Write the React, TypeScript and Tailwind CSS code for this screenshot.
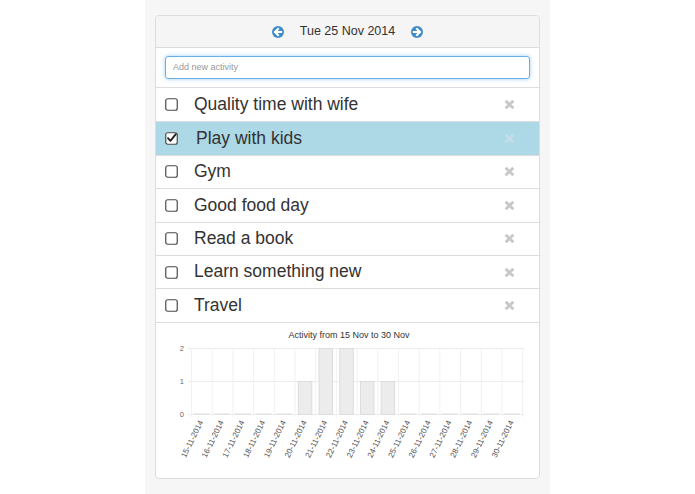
import React from "react";

const activities = [
  { name: "Quality time with wife", done: false },
  { name: "Play with kids", done: true },
  { name: "Gym", done: false },
  { name: "Good food day", done: false },
  { name: "Read a book", done: false },
  { name: "Learn something new", done: false },
  { name: "Travel", done: false },
];

const values = [0, 0, 0, 0, 0, 1, 2, 2, 1, 1, 0, 0, 0, 0, 0, 0];

function CircleArrow({ dir }: { dir: "left" | "right" }) {
  return (
    <svg width="12" height="12" viewBox="0 0 12 12">
      <circle cx="6" cy="6" r="6" fill="#428bca" />
      <g transform={dir === "right" ? "rotate(180 6 6)" : undefined}>
        <path d="M3 6 L6 3 M3 6 L6 9 M3 6 L9.2 6" stroke="#fff" strokeWidth="2" strokeLinecap="square" fill="none" />
      </g>
    </svg>
  );
}

function Checkbox({ checked }: { checked: boolean }) {
  return (
    <svg width="13" height="13" viewBox="0 0 13 13" className="shrink-0">
      <rect x="0.75" y="0.75" width="11.5" height="11.5" rx="2" fill="#fff" stroke="#4a4a4a" strokeWidth="1.2" />
      {checked && (
        <path d="M3 6.2 L5.4 8.8 L10.8 2.2" stroke="#222" strokeWidth="1.9" fill="none" strokeLinecap="round" strokeLinejoin="round" />
      )}
    </svg>
  );
}

function RemoveIcon({ faint }: { faint?: boolean }) {
  return (
    <svg width="11" height="11" viewBox="0 0 10 10" className="shrink-0">
      <path d="M1.5 1.5 L8.5 8.5 M8.5 1.5 L1.5 8.5" stroke={faint ? "#c2dde6" : "#c8c8c8"} strokeWidth="2.6" strokeLinecap="butt" />
    </svg>
  );
}

function Chart() {
  const x0 = 35;
  const step = 20.7;
  const yFor = (v: number) => 91 - v * 33;
  const labels = values.map((_, i) => `${15 + i}-11-2014`);
  return (
    <svg width="384" height="155" viewBox="0 0 384 155" style={{ fontFamily: '"Liberation Sans", Arial, sans-serif' }}>
      <text x="193" y="15" textAnchor="middle" fontSize="9" fill="#333">
        Activity from 15 Nov to 30 Nov
      </text>
      {[0, 1, 2].map((v) => (
        <g key={v}>
          <line x1={x0 - 3} x2={368} y1={yFor(v) + 0.5} y2={yFor(v) + 0.5} stroke="#ececec" strokeWidth="1" />
          <text x={x0 - 7} y={yFor(v) + 3} textAnchor="end" fontSize="7.5" fill="#666">
            {v}
          </text>
        </g>
      ))}
      {Array.from({ length: 17 }).map((_, i) => (
        <line key={i} x1={x0 + i * step + 0.5} x2={x0 + i * step + 0.5} y1={yFor(2)} y2={yFor(0) + 3} stroke="#f1f1f1" strokeWidth="1" />
      ))}
      {values.map((v, i) => {
        const cx = x0 + step * (i + 0.5);
        if (v === 0) {
          return <rect key={i} x={cx - 8} y={yFor(0) - 0.5} width="16" height="1.2" fill="#dedede" />;
        }
        return (
          <rect key={i} x={cx - 7 + 0.5} y={yFor(v) + 0.5} width="13.5" height={v * 33} fill="#ececec" stroke="#dcdcdc" strokeWidth="1" />
        );
      })}
      {labels.map((l, i) => {
        const cx = x0 + step * (i + 0.5) + 2;
        const y = 99;
        return (
          <text key={l} x={cx} y={y} textAnchor="end" fontSize="8" fill="#555" transform={`rotate(-64 ${cx} ${y})`}>
            {l}
          </text>
        );
      })}
    </svg>
  );
}

export default function App() {
  return (
    <div className="w-[695px] h-[494px] bg-white flex justify-center overflow-hidden" style={{ fontFamily: '"Liberation Sans", Arial, sans-serif' }}>
      <div className="w-[405px] h-full bg-[#f6f6f6] px-[10px] pt-[15px]">
        <div className="border border-[#dddddd] rounded-[4px] bg-white overflow-hidden">
          <div className="h-[32px] bg-[#f5f5f5] border-b border-[#dddddd] flex items-center justify-center">
            <CircleArrow dir="left" />
            <span className="mx-[16px] text-[12.5px] text-[#333] leading-none">Tue 25 Nov 2014</span>
            <CircleArrow dir="right" />
          </div>
          <div className="h-[40px] flex items-center px-[9px] border-b border-[#dddddd]">
            <div className="w-full h-[23px] rounded-[3px] border border-[#66afe9] shadow-[0_0_4px_rgba(102,175,233,0.6)] flex items-center px-[7px] text-[9px] text-[#999]">
              Add new activity
            </div>
          </div>
          {activities.map((a, i) => (
            <div
              key={a.name}
              className={`h-[33.4px] flex items-center pl-[9px] pr-[24px] ${i > 0 ? "border-t border-[#dddddd]" : ""} ${a.done ? "bg-[#add8e6]" : "bg-white"}`}
            >
              <Checkbox checked={a.done} />
              <span className={`${a.done ? "ml-[18px]" : "ml-[16px]"} flex-1 text-[17.5px] text-[#333] leading-none`}>{a.name}</span>
              <RemoveIcon faint={a.done} />
            </div>
          ))}
          <div className="border-t border-[#dddddd] h-[156px]">
            <Chart />
          </div>
        </div>
      </div>
    </div>
  );
}
